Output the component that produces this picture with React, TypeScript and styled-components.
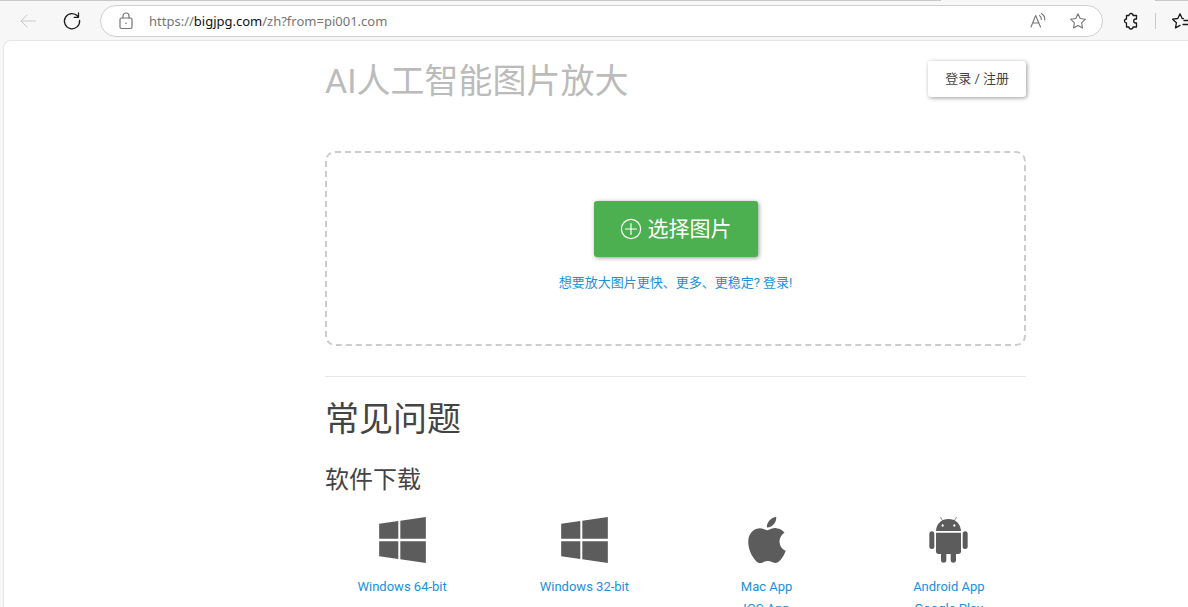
import React from "react";
import styled, { createGlobalStyle } from "styled-components";
import { ImAppleinc } from "react-icons/im";

const GlobalStyle = createGlobalStyle`
  * { box-sizing: border-box; }
  html, body, #root { height: 100%; }
  body {
    margin: 0;
    overflow: hidden;
    background: #f7f7f7;
    color: #444;
    font-family: Roboto, "Noto Sans CJK SC", sans-serif;
    font-size: 13px;
    line-height: 22px;
  }
`;

const Window = styled.div`
  height: 100vh;
  display: flex;
  flex-direction: column;
  overflow: hidden;
`;

const TabEdge = styled.div`
  flex: none;
  height: 1px;
  display: flex;
  justify-content: space-between;
`;

const Edge = styled.div<{ $grow?: boolean }>`
  flex: ${(p) => (p.$grow ? "1" : "0 0 33px")};
  margin-right: ${(p) => (p.$grow ? "214px" : "0")};
  background: #c8c8c8;
`;

const Toolbar = styled.header`
  flex: none;
  height: 39px;
  display: flex;
  align-items: center;
  padding-left: 16px;
`;

const ToolButton = styled.button<{ $muted?: boolean }>`
  flex: none;
  width: 24px;
  height: 24px;
  display: flex;
  align-items: center;
  justify-content: center;
  padding: 0;
  border: 0;
  background: none;
  color: ${(p) => (p.$muted ? "#c9c9c9" : "#1b1b1b")};
`;

const RefreshButton = styled(ToolButton)`
  margin: 0 16px 0 20px;
`;

const AddressBar = styled.div`
  flex: 1;
  min-width: 0;
  height: 32px;
  display: flex;
  align-items: center;
  padding: 0 12px 0 13px;
  border: 1px solid #cfcfcf;
  border-radius: 16px;
  background: #fff;
  color: #6e6e6e;
`;

const BarButton = styled(ToolButton)`
  color: #757575;
  margin-left: 16px;
  &:first-child { margin-left: 0; }
`;

const Url = styled.div`
  flex: 1;
  padding-left: 11px;
  font-family: "Noto Sans", sans-serif;
  font-size: 13px;
  line-height: 20px;
  white-space: nowrap;
  color: #757575;
  b { font-weight: 400; color: #111; }
`;

const Extras = styled.div`
  flex: none;
  width: 85px;
  display: flex;
  align-items: center;
  padding-left: 16px;
  overflow: hidden;
`;

const Divider = styled.span`
  flex: none;
  width: 1px;
  height: 16px;
  margin: 0 14px 0 12px;
  background: #cacaca;
`;

const Page = styled.main`
  flex: 1;
  min-height: 0;
  margin-left: 3px;
  padding: 20px 0 0 159px;
  overflow: hidden;
  border: 1px solid #e6e6e6;
  border-width: 1px 0 0 1px;
  border-radius: 8px 0 0 0;
  background: #fff;
`;

const Container = styled.div`
  max-width: 701px;
  margin: 0 auto;
`;

const Head = styled.div`
  display: flex;
  align-items: flex-start;
  justify-content: space-between;
`;

const Title = styled.h1`
  margin: 0;
  font-size: 34px;
  line-height: 40px;
  font-weight: 400;
  color: #bbb;
`;

const LoginButton = styled.button`
  height: 36px;
  padding: 0 17px;
  border: 0;
  border-radius: 3px;
  background: #fff;
  color: #444;
  font: inherit;
  box-shadow: 1px 1px 4px rgba(0, 0, 0, 0.4);
`;

const DropZone = styled.section`
  height: 195px;
  margin-top: 50px;
  display: flex;
  flex-direction: column;
  align-items: center;
  padding-top: 48px;
  border: 2px dashed #ccc;
  border-radius: 10px;
`;

const PickButton = styled.button`
  height: 56px;
  display: flex;
  align-items: center;
  gap: 6px;
  padding: 0 26px;
  border: 0;
  border-radius: 3px;
  background: #4caf50;
  color: #fff;
  font: inherit;
  font-size: 21px;
  box-shadow: 1px 1px 4px rgba(0, 0, 0, 0.4);
`;

const TextLink = styled.a`
  color: #2090dc;
  text-decoration: none;
`;

const Hint = styled.p`
  margin: 15px 0 0;
`;

const Rule = styled.hr`
  height: 1px;
  margin: 30px 0 20px;
  border: 0;
  background: #e8e8e8;
`;

const SectionTitle = styled.h2`
  margin: 0;
  font-size: 34px;
  line-height: 44px;
  font-weight: 400;
`;

const SubTitle = styled.h3`
  margin: 24px 0 0;
  font-size: 24px;
  line-height: 30px;
  font-weight: 400;
`;

const Downloads = styled.div`
  display: grid;
  grid-template-columns: repeat(4, 1fr);
  margin: 22px -14px 0;
`;

const Download = styled.div`
  display: flex;
  flex-direction: column;
  align-items: center;
  svg { color: #5c5c5c; margin-bottom: 13px; }
`;

const line = { fill: "none", stroke: "currentColor", strokeLinecap: "round", strokeLinejoin: "round" } as const;

const BackIcon = () => (
  <svg width="18" height="16" viewBox="0 0 18 16" {...line}>
    <path d="M8 2 2 8l6 6M2 8h14.500" />
  </svg>
);

const RefreshIcon = () => (
  <svg width="20" height="20" viewBox="0 0 20 20" {...line} strokeWidth="1.300">
    <path d="M17.600 9.500A7.600 7.600 0 1 1 15.600 5M16.500 2v4.300h-4.300" />
  </svg>
);

const LockIcon = () => (
  <svg width="14" height="18" viewBox="0 0 14 18" {...line} strokeWidth="1.200">
    <rect x="1" y="6" width="12" height="10.500" rx="1.500" />
    <path d="M4 6V4a3 3 0 0 1 6 0v2" />
    <circle cx="7" cy="11.200" r=".8" fill="currentColor" stroke="none" />
  </svg>
);

const ReadAloudIcon = () => (
  <svg width="18" height="18" viewBox="0 0 18 18" {...line} strokeWidth="1.100">
    <path d="M2 15 6.700 3.500 11.500 15M3.600 11h6.300M10.500 3.500q2 1.500 1.800 4M12.500 1.500q3.600 2.500 3.300 6.500" />
  </svg>
);

const StarIcon = () => (
  <svg width="18" height="18" viewBox="0 0 18 18" {...line} strokeWidth="1.100">
    <path d="M9 1.800l2.200 4.700 5.200.7-3.800 3.600.9 5.100L9 13.400l-4.500 2.500.9-5.100L1.600 7.200l5.200-.7z" />
  </svg>
);

const PuzzleIcon = () => (
  <svg width="18" height="18" viewBox="0 0 18 18" {...line} strokeWidth="1.300">
    <path d="M4.500 3.500H7a2 2 0 0 1 4 0h3.500V7h-.8a2 2 0 0 0 0 4h.8v4H11a2 2 0 0 1-4 0H4.500v-4a2 2 0 0 1 0-4z" />
  </svg>
);

const FavoritesIcon = () => (
  <svg width="22" height="18" viewBox="0 0 22 18" {...line} strokeWidth="1.300">
    <path d="M12.500 6.600l-1.300-.1L9 1.800 6.800 6.500l-5.200.7 3.800 3.600-.9 5.100L9 13.400M13 8.500h8M12 12.500h9" />
  </svg>
);

const PlusCircleIcon = () => (
  <svg width="22" height="22" viewBox="0 0 22 22" {...line} strokeWidth="1.200">
    <circle cx="11" cy="11" r="9.600" />
    <path d="M11 5.500v11M5.500 11h11" />
  </svg>
);

const WindowsIcon = () => (
  <svg width="47" height="46" viewBox="0 0 139 137" fill="currentColor">
    <path d="M0 20 57 12v53H0zM63 11 139 0v65H63zM0 72h57v53L0 117zM63 72h76v65L63 126z" />
  </svg>
);

const AndroidIcon = () => (
  <svg width="39" height="46" viewBox="0 0 117 138" fill="currentColor">
    <path d="M35 1l8 14M82 1l-8 14" stroke="currentColor" strokeWidth="2" strokeLinecap="round" />
    <path
      fillRule="evenodd"
      d="M21 42C22 20 38 6 58.500 6S95 20 96 42zM41 22a3.500 3.500 0 1 0 .1 0zM76 22a3.500 3.500 0 1 0 .1 0z"
    />
    <path d="M21 47h75v56q0 8-8 8H29q-8 0-8-8z" />
    <rect x="1" y="43" width="15" height="53" rx="7.500" />
    <rect x="101" y="43" width="15" height="53" rx="7.500" />
    <rect x="36" y="95" width="16" height="42" rx="8" />
    <rect x="65" y="95" width="16" height="42" rx="8" />
  </svg>
);

export default function App() {
  return (
    <Window>
      <GlobalStyle />
      <TabEdge><Edge $grow /><Edge /></TabEdge>
      <Toolbar>
        <ToolButton $muted aria-label="后退"><BackIcon /></ToolButton>
        <RefreshButton aria-label="刷新"><RefreshIcon /></RefreshButton>
        <AddressBar>
          <BarButton aria-label="网站信息"><LockIcon /></BarButton>
          <Url>https://<b>bigjpg.com</b>/zh?from=pi001.com</Url>
          <BarButton aria-label="大声朗读"><ReadAloudIcon /></BarButton>
          <BarButton aria-label="收藏此页"><StarIcon /></BarButton>
        </AddressBar>
        <Extras>
          <ToolButton aria-label="扩展"><PuzzleIcon /></ToolButton>
          <Divider />
          <ToolButton aria-label="收藏夹"><FavoritesIcon /></ToolButton>
        </Extras>
      </Toolbar>
      <Page>
        <Container>
          <Head>
            <Title>AI人工智能图片放大</Title>
            <LoginButton>登录 / 注册</LoginButton>
          </Head>
          <DropZone>
            <PickButton><PlusCircleIcon />选择图片</PickButton>
            <Hint><TextLink href="#login">想要放大图片更快、更多、更稳定? 登录!</TextLink></Hint>
          </DropZone>
          <Rule />
          <SectionTitle>常见问题</SectionTitle>
          <SubTitle>软件下载</SubTitle>
          <Downloads>
            <Download>
              <WindowsIcon />
              <TextLink href="#win64">Windows 64-bit</TextLink>
            </Download>
            <Download>
              <WindowsIcon />
              <TextLink href="#win32">Windows 32-bit</TextLink>
            </Download>
            <Download>
              <ImAppleinc size={46} />
              <TextLink href="#mac">Mac App</TextLink>
              <TextLink href="#ios">IOS App</TextLink>
            </Download>
            <Download>
              <AndroidIcon />
              <TextLink href="#android">Android App</TextLink>
              <TextLink href="#play">Google Play</TextLink>
            </Download>
          </Downloads>
        </Container>
      </Page>
    </Window>
  );
}
